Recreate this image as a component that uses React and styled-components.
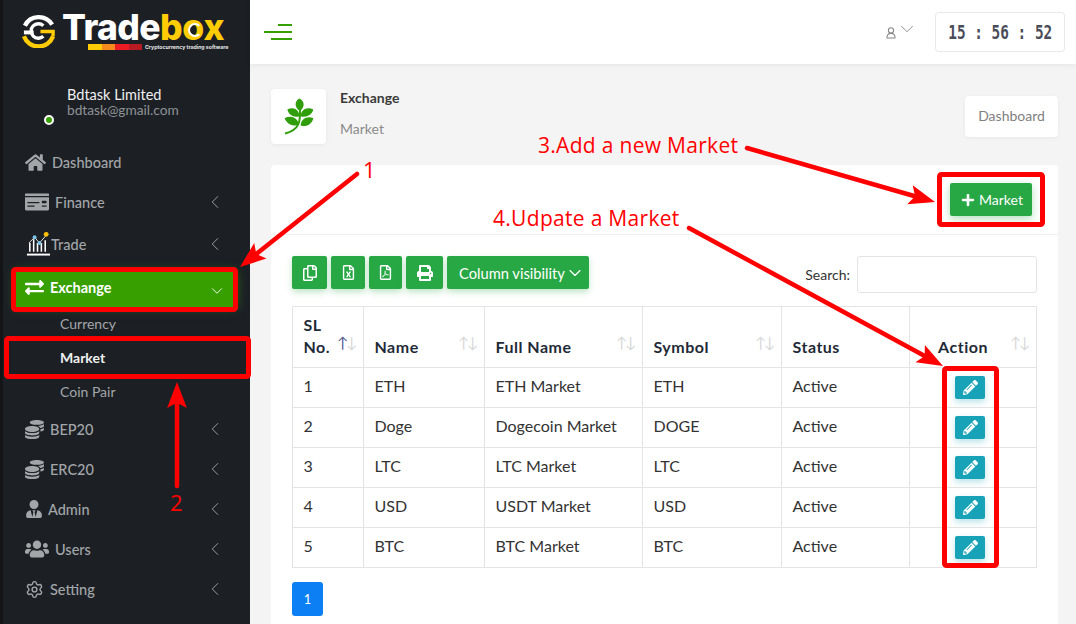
import styled, { createGlobalStyle } from 'styled-components'
import {
  FaHome, FaMoneyCheck, FaExchangeAlt, FaCoins, FaUserTie, FaUsers, FaPlus,
  FaRegCopy, FaRegFileExcel, FaRegFilePdf, FaPrint, FaPencilAlt,
} from 'react-icons/fa'
import { Settings, ChevronLeft, ChevronDown } from 'lucide-react'

const FONT = `Lato, "Noto Sans", sans-serif`

const GlobalStyle = createGlobalStyle`
  html, body { margin: 0; padding: 0; height: 624px; overflow: hidden; }
  body { font-family: ${FONT}; background: #f4f4f4; color: #333; }
  * { box-sizing: border-box; }
`

const Page = styled.div`
  position: relative;
  display: grid;
  grid-template-columns: 250px 1fr;
  width: 1076px;
  height: 624px;
  overflow: hidden;
`

const Sidebar = styled.aside`
  background: #1c2025;
  border-left: 3px solid #121416;
  color: #a3a6a9;
`

const LogoRow = styled.div`
  display: flex;
  align-items: flex-start;
  gap: 6px;
  height: 64px;
  padding: 13px 0 0 18px;
`

const LogoText = styled.div`
  display: flex;
  flex-direction: column;
`

const LogoWord = styled.div`
  font-family: Inter, sans-serif;
  font-weight: 800;
  font-size: 35.5px;
  line-height: 30px;
  letter-spacing: -0.6px;
  color: #fff;
  span { color: #ffcc05; }
`

const LogoRing = styled.span`
  position: relative;
  &::after {
    content: '';
    position: absolute;
    left: 6px;
    top: 17px;
    width: 10px;
    height: 10px;
    border: 2px solid #fff;
    border-right-color: transparent;
    border-radius: 50%;
  }
`

const LogoStrip = styled.div`
  display: flex;
  align-items: center;
  margin: 1px 0 0 26px;
`

const StripPiece = styled.i`
  display: block;
  width: 13.5px;
  height: 6px;
  background: ${({ $color }) => $color};
`

const LogoTag = styled.span`
  margin-left: 3px;
  font-family: Inter, sans-serif;
  font-size: 5.2px;
  font-weight: 700;
  color: #e8e8e8;
  white-space: nowrap;
`

const Profile = styled.div`
  position: relative;
  height: 78px;
  padding: 23px 0 0 64px;
`

const ProfileName = styled.div`
  color: #f0f0f0;
  font-size: 14.5px;
  line-height: 15px;
`

const ProfileMail = styled.div`
  color: #8f9296;
  font-size: 13.7px;
  line-height: 16px;
`

const StatusDot = styled.i`
  position: absolute;
  left: 41px;
  top: 51px;
  width: 10px;
  height: 10px;
  border-radius: 50%;
  background: #37a000;
  border: 2px solid #fff;
`

const NavItem = styled.div`
  display: flex;
  align-items: center;
  height: ${({ $active }) => ($active ? 35 : 40)}px;
  margin: ${({ $active, $gapTop }) => ($active ? '8px 14px 0 13px' : $gapTop ? '2px 0 0 0' : '0')};
  padding: ${({ $active }) => ($active ? '0 10px 5px 9px' : '0 24px 0 22px')};
  background: ${({ $active }) => ($active ? '#37a000' : 'transparent')};
  color: ${({ $active }) => ($active ? '#fff' : '#a3a6a9')};
  font-weight: ${({ $active }) => ($active ? 700 : 500)};
  font-size: 14.5px;
  box-shadow: ${({ $active }) => ($active ? '0 0 10px rgba(55,160,0,.7)' : 'none')};
`

const NavIcon = styled.span`
  display: flex;
  align-items: center;
  width: ${({ $w }) => $w}px;
  flex: none;
`

const NavLabel = styled.span`
  flex: 1;
`

const OpenChevron = styled(ChevronDown)`
  margin-top: 7px;
`

const SubList = styled.div`
  display: flex;
  flex-direction: column;
`

const SubItem = styled.div`
  height: 34px;
  line-height: 34px;
  padding-left: 57px;
  font-size: 14px;
  color: ${({ $active }) => ($active ? '#f0f0f0' : '#a3a6a9')};
  font-weight: ${({ $active }) => ($active ? 700 : 400)};
`

const Main = styled.main`
  display: flex;
  flex-direction: column;
  min-width: 0;
`

const TopBar = styled.header`
  display: flex;
  align-items: center;
  height: 64px;
  padding: 0 11px 0 14px;
  background: #fff;
  box-shadow: 0 1px 6px rgba(0, 0, 0, .07);
`

const Burger = styled.div`
  display: flex;
  flex-direction: column;
  align-items: flex-end;
  gap: 5px;
  width: 28px;
  margin-right: auto;
`

const BurgerLine = styled.i`
  display: block;
  height: 2px;
  width: ${({ $w }) => $w}px;
  background: #37a000;
`

const UserMenu = styled.div`
  display: flex;
  align-items: flex-start;
  margin-right: 17px;
  color: #888;
`

const UserSvg = styled.svg`
  margin-top: 3px;
`

const UserChevron = styled(ChevronDown)`
  margin-top: -6px;
`

const Clock = styled.div`
  display: flex;
  align-items: center;
  justify-content: center;
  width: 130px;
  height: 40px;
  border: 1px solid #e9e9e9;
  border-radius: 4px;
  overflow: hidden;
`

const ClockDigits = styled.span`
  display: block;
  font-family: "DejaVu Sans Mono", monospace;
  font-size: 20px;
  font-weight: 700;
  color: #4a4d58;
  white-space: pre;
  transform: scaleX(.72);
`

const Content = styled.div`
  display: flex;
  flex-direction: column;
  padding: 25px 18px 0 21px;
`

const CrumbRow = styled.div`
  display: flex;
  align-items: flex-start;
  height: 76px;
`

const LeafBox = styled.div`
  display: flex;
  align-items: center;
  justify-content: center;
  width: 55px;
  height: 55px;
  background: #fff;
  border-radius: 4px;
  box-shadow: 0 1px 4px rgba(0, 0, 0, .06);
`

const CrumbText = styled.div`
  display: flex;
  flex-direction: column;
  gap: 13px;
  margin-left: 14px;
`

const CrumbTitle = styled.div`
  font-size: 14px;
  line-height: 18px;
  font-weight: 700;
  color: #3a3a3a;
`

const CrumbSub = styled.div`
  font-size: 14px;
  line-height: 18px;
  color: #8a8a8a;
`

const DashButton = styled.div`
  margin: 7px 0 0 auto;
  width: 93px;
  height: 41px;
  line-height: 39px;
  text-align: center;
  background: #fff;
  border-radius: 4px;
  color: #808080;
  font-size: 14px;
  box-shadow: 0 1px 4px rgba(0, 0, 0, .05);
`

const Card = styled.section`
  background: #fff;
  border-radius: 4px;
  height: 470px;
`

const CardHead = styled.div`
  display: flex;
  justify-content: flex-end;
  align-items: flex-start;
  height: 70px;
  padding: 18px 26px 0 0;
  border-bottom: 1px solid #efefef;
`

const AddButton = styled.div`
  display: flex;
  align-items: center;
  gap: 4px;
  width: 82px;
  height: 33px;
  padding-left: 11px;
  background: #28a745;
  border-radius: 2px;
  color: #fff;
  font-size: 14px;
  box-shadow: 0 3px 8px rgba(40, 167, 69, .35);
`

const CardBody = styled.div`
  padding: 21px 21px 0 21px;
`

const Tools = styled.div`
  display: flex;
  align-items: flex-start;
  height: 50px;
`

const ToolButton = styled.div`
  display: flex;
  align-items: center;
  justify-content: center;
  width: ${({ $w }) => $w}px;
  height: 33px;
  margin-right: 4px;
  background: #28a745;
  border-radius: 2px;
  color: #fff;
  box-shadow: 0 3px 6px rgba(40, 167, 69, .3);
`

const ColumnButton = styled(ToolButton)`
  justify-content: flex-start;
  padding-left: 12px;
  font-size: 14.7px;
`

const SearchWrap = styled.label`
  display: flex;
  align-items: center;
  gap: 7px;
  margin-left: auto;
  font-size: 14px;
  color: #333;
`

const SearchInput = styled.div`
  width: 180px;
  height: 37px;
  border: 1px solid #e4e4e4;
  border-radius: 3px;
  background: #fff;
`

const Table = styled.table`
  width: 744px;
  border-collapse: collapse;
  table-layout: fixed;
  font-size: 16px;
`

const Th = styled.th`
  position: relative;
  height: 61px;
  padding: ${({ $center }) => ($center ? '0 20px 9px 0' : '0 10.5px 9px')};
  border: 1px solid #e4e4e4;
  width: ${({ $w }) => $w}px;
  vertical-align: bottom;
  text-align: ${({ $center }) => ($center ? 'center' : 'left')};
  line-height: 22px;
  font-weight: 700;
  letter-spacing: .5px;
  color: #1f2a37;
`

const SortMark = styled.span`
  position: absolute;
  right: 8px;
  bottom: 17px;
  display: flex;
  font-weight: 400;
  font-size: 15px;
  line-height: 15px;
  letter-spacing: 0;
`

const SortArrow = styled.i`
  display: block;
  width: 9px;
  text-align: center;
  font-style: normal;
  color: ${({ $on }) => ($on ? '#55588f' : '#d8d8d8')};
`

const Td = styled.td`
  height: 40px;
  padding: 0 10.5px 4px;
  border: 1px solid #e4e4e4;
  color: #333;
`

const ActionCell = styled(Td)`
  padding: 0 0 0 45px;
`

const EditButton = styled.span`
  display: inline-flex;
  align-items: center;
  justify-content: center;
  width: 30px;
  height: 23px;
  vertical-align: middle;
  background: #17a2b8;
  border-radius: 2px;
  color: #fff;
  font-size: 15px;
  box-shadow: 0 3px 6px rgba(23, 162, 184, .3);
`

const PageButton = styled.div`
  width: 31px;
  height: 34px;
  margin-top: 14px;
  line-height: 34px;
  text-align: center;
  background: #0d7ff5;
  border-radius: 3px;
  color: #fff;
  font-size: 13px;
`

const Overlay = styled.svg`
  position: absolute;
  inset: 0;
  width: 1076px;
  height: 624px;
  pointer-events: none;
`

const Note = styled.span`
  position: absolute;
  left: ${({ $x }) => $x}px;
  top: ${({ $y }) => $y}px;
  font-family: "Open Sans", sans-serif;
  font-size: ${({ $size }) => $size || 21}px;
  line-height: 28px;
  letter-spacing: .3px;
  color: #ff0000;
  white-space: nowrap;
`

function MiniLogo() {
  return (
    <svg width="35" height="35" viewBox="0 0 36 36" fill="none">
      <path d="M32 12A16 16 0 0 0 4 13" stroke="#fff" strokeWidth="4.5" />
      <path d="M3 20h10" stroke="#fff" strokeWidth="4" />
      <path d="M3 24A16 16 0 0 0 33 24" stroke="#ffcc05" strokeWidth="4.5" />
      <path d="M23 13a7.5 7.5 0 1 0 0 11" stroke="#fff" strokeWidth="3.5" />
      <path d="M20 19h13v5" stroke="#ffcc05" strokeWidth="3.5" />
    </svg>
  )
}

function Leaf() {
  return (
    <svg width="30" height="37" viewBox="0 0 90 110" fill="#2f9e0a">
      <path d="M47 38C30 28 32 8 46 1C62 8 64 28 47 38z" />
      <path d="M46 54C30 60 14 50 10 34C28 24 46 34 46 54z" />
      <path d="M50 54C50 34 70 24 88 34C84 50 66 60 50 54z" />
      <path d="M44 80C28 86 8 78 2 60C20 50 42 58 44 80z" />
      <path d="M50 82C50 62 70 52 88 60C84 78 66 88 50 82z" />
      <path d="M48 34C48 62 52 94 3 106" fill="none" stroke="#2f9e0a" strokeWidth="6" />
    </svg>
  )
}

function TradeIcon() {
  return (
    <svg width="27" height="26" viewBox="0 0 27 26" fill="none">
      <path d="M2 24h24" stroke="#fff" strokeWidth="2" />
      <path d="M5 21V12M9 21V8M13 21v-9M17 21V12M21 21V9" stroke="#fff" strokeWidth="1.6" />
      <path d="M4 12l6-6 5 6 7-8" stroke="#e6e6e6" strokeWidth="1" />
      <circle cx="10" cy="6" r="2" fill="#7cc4ec" />
      <circle cx="15" cy="12" r="2" fill="#7cc4ec" />
      <circle cx="22" cy="3" r="2.5" fill="#ffc107" />
    </svg>
  )
}

function UserGlyph() {
  return (
    <UserSvg width="10" height="12" viewBox="0 0 10 12" fill="none" stroke="#888" strokeWidth="1.1">
      <circle cx="5" cy="3.4" r="2.6" />
      <path d="M1 11c-.4-3 1.4-4.6 4-4.6s4.4 1.6 4 4.6z" />
    </UserSvg>
  )
}

function Arrow({ from, to, width = 4.5, head = 26 }) {
  const [x1, y1] = from
  const [x2, y2] = to
  const len = Math.hypot(x2 - x1, y2 - y1)
  const ux = (x2 - x1) / len
  const uy = (y2 - y1) / len
  const bx = x2 - ux * head
  const by = y2 - uy * head
  const nx = -uy * head * 0.38
  const ny = ux * head * 0.38
  const mx = x2 - ux * head * 0.8
  const my = y2 - uy * head * 0.8
  return (
    <g>
      <line x1={x1} y1={y1} x2={mx} y2={my} stroke="#f00" strokeWidth={width} strokeLinecap="round" />
      <polygon points={`${x2},${y2} ${bx + nx},${by + ny} ${mx},${my} ${bx - nx},${by - ny}`} fill="#f00" />
    </g>
  )
}

const chevron = <ChevronLeft size={22} strokeWidth={1} color="#a3a6a9" />

const rows = [
  [1, 'ETH', 'ETH Market', 'ETH'],
  [2, 'Doge', 'Dogecoin Market', 'DOGE'],
  [3, 'LTC', 'LTC Market', 'LTC'],
  [4, 'USD', 'USDT Market', 'USD'],
  [5, 'BTC', 'BTC Market', 'BTC'],
]

const Sort = ({ on }) => (
  <SortMark>
    <SortArrow $on={on}>↑</SortArrow>
    <SortArrow>↓</SortArrow>
  </SortMark>
)

export default function App() {
  return (
    <Page>
      <GlobalStyle />
      <Sidebar>
        <LogoRow>
          <MiniLogo />
          <LogoText>
            <LogoWord>Trade<span>b<LogoRing>o</LogoRing>x</span></LogoWord>
            <LogoStrip>
              <StripPiece $color="#ffcc05" />
              <StripPiece $color="#f58a1f" />
              <StripPiece $color="#ed1c24" />
              <StripPiece $color="#b71c24" />
              <LogoTag>Cryptocurrency trading software</LogoTag>
            </LogoStrip>
          </LogoText>
        </LogoRow>
        <Profile>
          <ProfileName>Bdtask Limited</ProfileName>
          <ProfileMail>bdtask@gmail.com</ProfileMail>
          <StatusDot />
        </Profile>
        <NavItem><NavIcon $w={27}><FaHome size={21} /></NavIcon><NavLabel>Dashboard</NavLabel></NavItem>
        <NavItem><NavIcon $w={30}><FaMoneyCheck size={24} /></NavIcon><NavLabel>Finance</NavLabel>{chevron}</NavItem>
        <NavItem $gapTop><NavIcon $w={26}><TradeIcon /></NavIcon><NavLabel>Trade</NavLabel>{chevron}</NavItem>
        <NavItem $active><NavIcon $w={25}><FaExchangeAlt size={19} /></NavIcon><NavLabel>Exchange</NavLabel><OpenChevron size={18} strokeWidth={1.2} /></NavItem>
        <SubList>
          <SubItem>Currency</SubItem>
          <SubItem $active>Market</SubItem>
          <SubItem>Coin Pair</SubItem>
        </SubList>
        <NavItem><NavIcon $w={25}><FaCoins size={19} /></NavIcon><NavLabel>BEP20</NavLabel>{chevron}</NavItem>
        <NavItem><NavIcon $w={25}><FaCoins size={19} /></NavIcon><NavLabel>ERC20</NavLabel>{chevron}</NavItem>
        <NavItem><NavIcon $w={23}><FaUserTie size={18} /></NavIcon><NavLabel>Admin</NavLabel>{chevron}</NavItem>
        <NavItem><NavIcon $w={30}><FaUsers size={24} /></NavIcon><NavLabel>Users</NavLabel>{chevron}</NavItem>
        <NavItem><NavIcon $w={25}><Settings size={19} strokeWidth={1.8} /></NavIcon><NavLabel>Setting</NavLabel>{chevron}</NavItem>
      </Sidebar>

      <Main>
        <TopBar>
          <Burger>
            <BurgerLine $w={14} />
            <BurgerLine $w={28} />
            <BurgerLine $w={21} />
          </Burger>
          <UserMenu>
            <UserGlyph />
            <UserChevron size={22} strokeWidth={1} />
          </UserMenu>
          <Clock><ClockDigits>15 : 56 : 52</ClockDigits></Clock>
        </TopBar>
        <Content>
          <CrumbRow>
            <LeafBox><Leaf /></LeafBox>
            <CrumbText>
              <CrumbTitle>Exchange</CrumbTitle>
              <CrumbSub>Market</CrumbSub>
            </CrumbText>
            <DashButton>Dashboard</DashButton>
          </CrumbRow>
          <Card>
            <CardHead>
              <AddButton><FaPlus size={14} /> Market</AddButton>
            </CardHead>
            <CardBody>
              <Tools>
                <ToolButton $w={35}><FaRegCopy size={16} /></ToolButton>
                <ToolButton $w={34}><FaRegFileExcel size={15} /></ToolButton>
                <ToolButton $w={33}><FaRegFilePdf size={15} /></ToolButton>
                <ToolButton $w={37}><FaPrint size={16} /></ToolButton>
                <ColumnButton $w={142}>Column visibility<ChevronDown size={20} strokeWidth={1.4} /></ColumnButton>
                <SearchWrap>Search: <SearchInput /></SearchWrap>
              </Tools>
              <Table>
                <thead>
                  <tr>
                    <Th $w={71}>SL<br />No.<Sort on /></Th>
                    <Th $w={121}>Name<Sort /></Th>
                    <Th $w={158}>Full Name<Sort /></Th>
                    <Th $w={139}>Symbol<Sort /></Th>
                    <Th $w={128}>Status</Th>
                    <Th $w={127} $center>Action<Sort /></Th>
                  </tr>
                </thead>
                <tbody>
                  {rows.map(([id, name, full, symbol]) => (
                    <tr key={id}>
                      <Td>{id}</Td>
                      <Td>{name}</Td>
                      <Td>{full}</Td>
                      <Td>{symbol}</Td>
                      <Td>Active</Td>
                      <ActionCell><EditButton><FaPencilAlt /></EditButton></ActionCell>
                    </tr>
                  ))}
                </tbody>
              </Table>
              <PageButton>1</PageButton>
            </CardBody>
          </Card>
        </Content>
      </Main>

      <Overlay viewBox="0 0 1076 624" fill="none">
        <rect x="13.5" y="269.5" width="222" height="40" rx="2" stroke="#f00" strokeWidth="5" />
        <rect x="6.5" y="338.5" width="242" height="38" rx="2" stroke="#f00" strokeWidth="5" />
        <rect x="939.5" y="174.5" width="103" height="50" rx="2" stroke="#f00" strokeWidth="5" />
        <rect x="944.5" y="368.5" width="52" height="197" rx="2" stroke="#f00" strokeWidth="5" />
        <Arrow from={[357, 174]} to={[240, 267]} />
        <Arrow from={[177, 486]} to={[177, 382]} />
        <Arrow from={[747, 148]} to={[935, 202]} />
        <Arrow from={[689, 228]} to={[943, 366]} />
      </Overlay>
      <Note $x={363} $y={155} $size={22}>1</Note>
      <Note $x={170} $y={488} $size={22}>2</Note>
      <Note $x={538} $y={131}>3.Add a new Market</Note>
      <Note $x={493} $y={204}>4.Udpate a Market</Note>
    </Page>
  )
}
